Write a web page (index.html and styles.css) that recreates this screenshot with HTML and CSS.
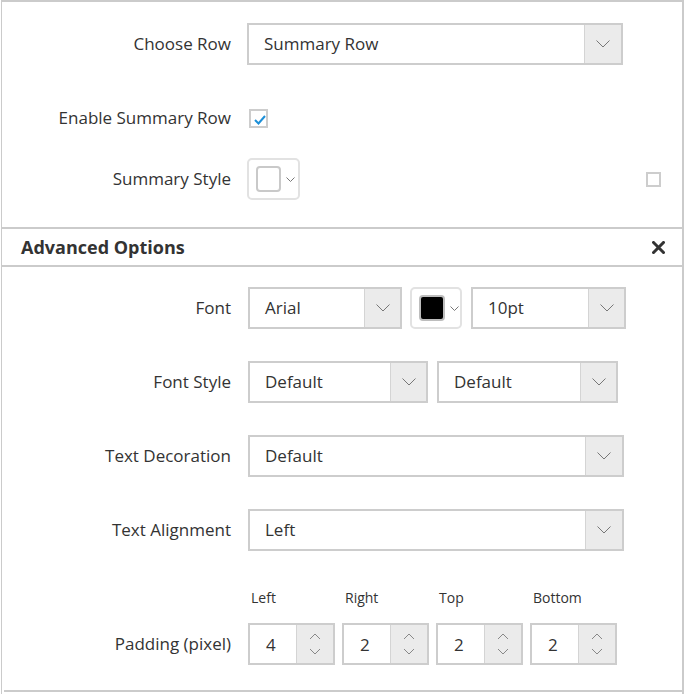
FILE: index.html
```html
<!DOCTYPE html>
<html>
<head>
<meta charset="utf-8">
<link rel="stylesheet" href="styles.css">
</head>
<body>
<div class="panel">
  <div class="row row-choose">
    <div class="label">Choose Row</div>
    <div class="select w376">
      <span class="select-text">Summary Row</span>
      <span class="arrow"><svg width="14" height="8" viewBox="0 0 14 8"><polyline points="0.5,0.5 7,7 13.5,0.5" fill="none" stroke="#777" stroke-width="1"/></svg></span>
    </div>
  </div>
  <div class="row row-enable">
    <div class="label">Enable Summary Row</div>
    <span class="checkbox"><svg width="14" height="14" viewBox="0 0 14 14"><polyline points="2,8 5.5,11.5 12,4" fill="none" stroke="#1c8fd8" stroke-width="2"/></svg></span>
  </div>
  <div class="row row-style">
    <div class="label">Summary Style</div>
    <div class="picker">
      <span class="swatch swatch-white"></span>
      <svg class="mini-chev" width="9" height="5" viewBox="0 0 9 5"><polyline points="0.5,0.5 4.5,4.5 8.5,0.5" fill="none" stroke="#777" stroke-width="1"/></svg>
    </div>
    <span class="small-check"></span>
  </div>

  <div class="section-head">
    <span class="head-title">Advanced Options</span>
    <svg class="close" width="13" height="13" viewBox="0 0 13 13"><path d="M1.5 1.5 L11.5 11.5 M11.5 1.5 L1.5 11.5" stroke="#333" stroke-width="3" stroke-linecap="square"/></svg>
  </div>

  <div class="row row-adv row-font">
    <div class="label">Font</div>
    <div class="select w154">
      <span class="select-text">Arial</span>
      <span class="arrow"><svg width="14" height="8" viewBox="0 0 14 8"><polyline points="0.5,0.5 7,7 13.5,0.5" fill="none" stroke="#777" stroke-width="1"/></svg></span>
    </div>
    <div class="picker picker-font">
      <span class="swatch swatch-black"></span>
      <svg class="mini-chev" width="9" height="5" viewBox="0 0 9 5"><polyline points="0.5,0.5 4.5,4.5 8.5,0.5" fill="none" stroke="#777" stroke-width="1"/></svg>
    </div>
    <div class="select w155">
      <span class="select-text">10pt</span>
      <span class="arrow"><svg width="14" height="8" viewBox="0 0 14 8"><polyline points="0.5,0.5 7,7 13.5,0.5" fill="none" stroke="#777" stroke-width="1"/></svg></span>
    </div>
  </div>

  <div class="row row-adv">
    <div class="label">Font Style</div>
    <div class="pair">
      <div class="select w180">
        <span class="select-text">Default</span>
        <span class="arrow"><svg width="14" height="8" viewBox="0 0 14 8"><polyline points="0.5,0.5 7,7 13.5,0.5" fill="none" stroke="#777" stroke-width="1"/></svg></span>
      </div>
      <div class="select w181">
        <span class="select-text">Default</span>
        <span class="arrow"><svg width="14" height="8" viewBox="0 0 14 8"><polyline points="0.5,0.5 7,7 13.5,0.5" fill="none" stroke="#777" stroke-width="1"/></svg></span>
      </div>
    </div>
  </div>

  <div class="row row-adv">
    <div class="label">Text Decoration</div>
    <div class="select w376">
      <span class="select-text">Default</span>
      <span class="arrow"><svg width="14" height="8" viewBox="0 0 14 8"><polyline points="0.5,0.5 7,7 13.5,0.5" fill="none" stroke="#777" stroke-width="1"/></svg></span>
    </div>
  </div>

  <div class="row row-adv">
    <div class="label">Text Alignment</div>
    <div class="select w376">
      <span class="select-text">Left</span>
      <span class="arrow"><svg width="14" height="8" viewBox="0 0 14 8"><polyline points="0.5,0.5 7,7 13.5,0.5" fill="none" stroke="#777" stroke-width="1"/></svg></span>
    </div>
  </div>

  <div class="pad-labels">
    <span>Left</span><span>Right</span><span>Top</span><span>Bottom</span>
  </div>

  <div class="row row-pad">
    <div class="label">Padding (pixel)</div>
    <div class="spins">
      <div class="spin"><span class="spin-val">4</span><span class="spin-btn"><svg width="12" height="22" viewBox="0 0 12 22"><polyline points="1,6 6,1 11,6" fill="none" stroke="#888" stroke-width="1"/><polyline points="1,16 6,21 11,16" fill="none" stroke="#888" stroke-width="1"/></svg></span></div>
      <div class="spin"><span class="spin-val">2</span><span class="spin-btn"><svg width="12" height="22" viewBox="0 0 12 22"><polyline points="1,6 6,1 11,6" fill="none" stroke="#888" stroke-width="1"/><polyline points="1,16 6,21 11,16" fill="none" stroke="#888" stroke-width="1"/></svg></span></div>
      <div class="spin"><span class="spin-val">2</span><span class="spin-btn"><svg width="12" height="22" viewBox="0 0 12 22"><polyline points="1,6 6,1 11,6" fill="none" stroke="#888" stroke-width="1"/><polyline points="1,16 6,21 11,16" fill="none" stroke="#888" stroke-width="1"/></svg></span></div>
      <div class="spin"><span class="spin-val">2</span><span class="spin-btn"><svg width="12" height="22" viewBox="0 0 12 22"><polyline points="1,6 6,1 11,6" fill="none" stroke="#888" stroke-width="1"/><polyline points="1,16 6,21 11,16" fill="none" stroke="#888" stroke-width="1"/></svg></span></div>
    </div>
  </div>

  <div class="bottom-line"></div>
</div>
</body>
</html>
```

FILE: styles.css
```css
* { box-sizing: border-box; }
html, body { margin: 0; padding: 0; background: #fff; }
body {
  font-family: "Open Sans", "Noto Sans", sans-serif;
  font-size: 17px;
  color: #333;
}
.panel {
  margin-left: 1px;
  width: 683px;
  height: 694px;
  border-top: 2px solid #cbcbcb;
  border-left: 1px solid #cbcbcb;
  border-right: 2px solid #cbcbcb;
}
.row {
  display: flex;
  align-items: center;
}
.label {
  width: 229px;
  flex: none;
  text-align: right;
  margin-right: 16px;
  padding-bottom: 2px;
  white-space: nowrap;
}
.row-choose { margin-top: 21px; height: 42px; }
.row-enable { margin-top: 32px; height: 42px; }
.row-enable .checkbox { margin-left: 2px; }
.row-style { margin-top: 19px; height: 42px; }

.select {
  display: flex;
  height: 42px;
  border: 2px solid #cdcdcd;
  background: #fff;
}
.select-text {
  flex: 1;
  display: flex;
  align-items: center;
  padding-left: 15px;
  padding-bottom: 1px;
}
.arrow {
  width: 37px;
  flex: none;
  display: flex;
  align-items: center;
  justify-content: center;
  background: #ebebeb;
  border-left: 1px solid #d4d4d4;
}
.w376 { width: 376px; }
.w154 { width: 154px; }
.w155 { width: 155px; }
.w180 { width: 180px; }
.w181 { width: 181px; }
.w154 .arrow, .w155 .arrow, .w180 .arrow, .w181 .arrow { width: 36px; }

.checkbox {
  width: 19px;
  height: 19px;
  border: 2px solid #cdcdcd;
  display: flex;
  align-items: flex-end;
  justify-content: flex-end;
}
.checkbox svg { margin: 0 -1px 0 0; }

.picker {
  width: 53px;
  height: 42px;
  border: 2px solid #e2e2e2;
  border-radius: 5px;
  display: flex;
  align-items: center;
  padding-left: 7px;
}
.swatch {
  width: 25px;
  height: 26px;
  border: 2px solid #c9c9c9;
  border-radius: 4px;
  flex: none;
}
.swatch-white { background: #fff; }
.swatch-black { background: #000; border-color: #bdbdbd; width: 26px; height: 26px; }
.mini-chev { margin-left: 5px; margin-top: 1px; }

.small-check {
  width: 15px;
  height: 15px;
  border: 2px solid #cdcdcd;
  margin-left: auto;
  margin-right: 21px;
}

.section-head {
  margin-top: 27px;
  height: 40px;
  border-top: 2px solid #cbcbcb;
  border-bottom: 2px solid #cbcbcb;
  display: flex;
  align-items: center;
  padding-left: 19px;
  padding-right: 17px;
}
.head-title {
  font-weight: 700;
  font-size: 18px;
  color: #333;
  flex: 1;
}

.row-adv { margin-top: 32px; height: 42px; }
.row-font { margin-top: 20px; }
.row-adv .label { margin-right: 17px; }
.row-font .picker-font { margin-left: 8px; margin-right: 9px; width: 52px; }
.pair { display: flex; gap: 9px; }

.pad-labels {
  margin-top: 36px;
  padding-left: 249px;
  display: flex;
  font-size: 14px;
  height: 20px;
  align-items: center;
}
.pad-labels span { width: 94px; }

.row-pad { margin-top: 16px; height: 42px; }
.row-pad .label { margin-right: 17px; }
.spins { display: flex; gap: 7px; }
.spin {
  width: 87px;
  height: 42px;
  display: flex;
  border: 2px solid #cdcdcd;
}
.spin-val {
  flex: 1;
  display: flex;
  align-items: center;
  padding-left: 16px;
}
.spin-btn {
  width: 37px;
  flex: none;
  background: #ebebeb;
  border-left: 1px solid #d4d4d4;
  display: flex;
  align-items: center;
  justify-content: center;
}

.bottom-line {
  margin-top: 25px;
  margin-left: 2px;
  height: 2px;
  background: #cbcbcb;
}
```
